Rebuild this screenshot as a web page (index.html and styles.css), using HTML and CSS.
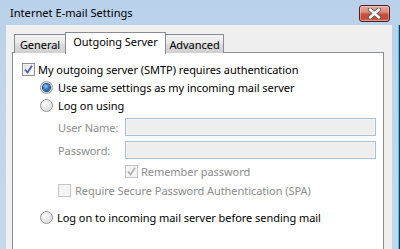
FILE: index.html
```html
<!DOCTYPE html>
<html>
<head>
<meta charset="utf-8">
<link rel="stylesheet" href="styles.css">
</head>
<body>
<div class="window">
  <div class="titlebar">
    <span class="title">Internet E-mail Settings</span>
    <div class="close">
      <svg width="15" height="11" viewBox="0 0 15 11">
        <path d="M3 1.5 L12 9.5 M12 1.5 L3 9.5" stroke="#5a5a5a" stroke-width="4.2" stroke-linecap="round"/>
        <path d="M3 1.5 L12 9.5 M12 1.5 L3 9.5" stroke="#ffffff" stroke-width="2.4" stroke-linecap="round"/>
      </svg>
    </div>
  </div>
  <div class="frame">
    <div class="client">
      <div class="tabs">
        <div class="tab tab-general">General</div>
        <div class="tab tab-active">Outgoing Server</div>
        <div class="tab tab-adv">Advanced</div>
      </div>
      <div class="panel">
        <div class="row row-auth">
          <span class="check checked"><svg width="9" height="9" viewBox="0 0 9 9"><path d="M1 4.5 L3.5 7.5 L8 0.8" fill="none" stroke="#4c62a8" stroke-width="1.8"/></svg></span>
          <span class="label">My outgoing server (SMTP) requires authentication</span>
        </div>
        <div class="row row-indent">
          <span class="radio selected"><span class="dot"></span></span>
          <span class="label">Use same settings as my incoming mail server</span>
        </div>
        <div class="row row-indent">
          <span class="radio"></span>
          <span class="label">Log on using</span>
        </div>
        <div class="field field-first">
          <span class="flabel">User Name:</span>
          <span class="input"></span>
        </div>
        <div class="field field-second">
          <span class="flabel">Password:</span>
          <span class="input"></span>
        </div>
        <div class="row row-remember">
          <span class="check disabled"><svg width="9" height="9" viewBox="0 0 9 9"><path d="M1 4.5 L3.5 7.5 L8 0.8" fill="none" stroke="#b4b4b4" stroke-width="1.8"/></svg></span>
          <span class="label dim">Remember password</span>
        </div>
        <div class="row row-spa">
          <span class="check disabled"></span>
          <span class="label dim">Require Secure Password Authentication (SPA)</span>
        </div>
        <div class="row row-last">
          <span class="radio"></span>
          <span class="label">Log on to incoming mail server before sending mail</span>
        </div>
      </div>
    </div>
    <div class="edge"></div>
  </div>
</div>
</body>
</html>
```

FILE: styles.css
```css
html, body {
  margin: 0;
  padding: 0;
}
body {
  width: 400px;
  height: 249px;
  overflow: hidden;
  font-family: "Noto Sans", "Open Sans", sans-serif;
  font-size: 11px;
  letter-spacing: -0.05px;
  color: #000;
}
.window {
  width: 400px;
  height: 249px;
  display: flex;
  flex-direction: column;
  background: linear-gradient(to bottom, #b9d1ea 0px, #c1d6ec 120px, #c4d8ee 249px);
}
.titlebar {
  height: 25px;
  flex: 0 0 25px;
  display: flex;
  align-items: flex-start;
  justify-content: space-between;
  padding: 0 10px 0 10px;
  box-sizing: border-box;
}
.title {
  margin-top: 5px;
  line-height: 16px;
  font-size: 11.1px;
  letter-spacing: 0;
  color: #000;
}
.close {
  margin-top: 5px;
  width: 31px;
  height: 17px;
  box-sizing: border-box;
  border: 1px solid #4b1e24;
  border-radius: 3px;
  background: linear-gradient(to bottom, #e9a99c 0%, #dc8a7b 40%, #c8503f 55%, #c24a38 80%, #d46b52 100%);
  box-shadow: inset 0 0 0 1px rgba(255,255,255,0.35);
  display: flex;
  align-items: center;
  justify-content: center;
}
.frame {
  flex: 1;
  display: flex;
  padding-left: 6px;
}
.client {
  width: 386px;
  background: #f0f0f0;
  padding: 7px 8px 0 6px;
  box-sizing: border-box;
  display: flex;
  flex-direction: column;
}
.edge {
  width: 6px;
  margin-left: 0;
  border-right: 1px solid #3fcbef;
  box-shadow: 1px 0 0 #1d3547;
}
.tabs {
  display: flex;
  align-items: flex-end;
  height: 21px;
  padding-left: 2px;
  position: relative;
  z-index: 1;
  margin-bottom: -1px;
}
.tab {
  box-sizing: border-box;
  height: 19px;
  border: 1px solid #898c95;
  border-bottom: none;
  background: linear-gradient(to bottom, #f2f2f2 0%, #ebebeb 45%, #dddddd 50%, #cfcfcf 100%);
  line-height: 17px;
  padding-top: 1px;
  text-align: center;
}
.tab-general {
  width: 51px;
  border-right: none;
}
.tab-active {
  width: 101px;
  height: 22px;
  background: #ffffff;
  line-height: 17px;
  padding-top: 0;
  margin-bottom: 0;
  position: relative;
  top: 1px;
}
.tab-adv {
  width: 58px;
  border-left: none;
}
.panel {
  flex: 1;
  background: #ffffff;
  border: 1px solid #898c95;
  border-bottom: none;
  padding-top: 7px;
  padding-left: 9px;
}
.row {
  height: 18px;
  display: flex;
  align-items: center;
}
.row-indent {
  padding-left: 18px;
}
.check {
  width: 13px;
  height: 13px;
  box-sizing: border-box;
  border: 1px solid #8e8f8f;
  background: linear-gradient(135deg, #dcdcdc 0%, #f4f4f4 60%, #ffffff 100%);
  box-shadow: inset 0 0 0 1px #f4f4f4;
  display: flex;
  align-items: center;
  justify-content: center;
  flex: 0 0 13px;
}
.check.disabled {
  border-color: #c4c4c4;
  background: #f4f4f4;
  box-shadow: none;
}
.label {
  margin-left: 3px;
  white-space: nowrap;
}
.row-indent .label {
  margin-left: 5px;
}
.dim {
  color: #8d8d8d;
}
.radio {
  width: 13px;
  height: 13px;
  box-sizing: border-box;
  border-radius: 50%;
  border: 1px solid #9a9a9a;
  background: radial-gradient(circle at 40% 35%, #ffffff 0%, #eaeaea 45%, #cfcfcf 100%);
  display: flex;
  align-items: center;
  justify-content: center;
  flex: 0 0 13px;
}
.radio .dot {
  width: 7px;
  height: 7px;
  border-radius: 50%;
  background: radial-gradient(circle at 40% 35%, #9fd0f5 0%, #2f7dc8 45%, #123f86 100%);
  box-shadow: 0 0 0 1px #1b3f78;
}
.field {
  height: 18px;
  display: flex;
  align-items: center;
  padding-left: 36px;
  color: #8d8d8d;
}
.field-first {
  margin-top: 4px;
}
.field-second {
  margin-top: 5px;
}
.flabel {
  width: 67px;
  flex: 0 0 67px;
  white-space: nowrap;
}
.input {
  width: 251px;
  height: 18px;
  box-sizing: border-box;
  border: 1px solid #abbfd6;
  background: #eeeeee;
  box-shadow: inset 0 0 0 1px #f5f5f5;
}
.row-remember {
  margin-top: 3px;
  padding-left: 103px;
}
.row-spa {
  margin-top: 1px;
  padding-left: 36px;
}
.row-spa .label {
  margin-left: 4px;
}
.row-last {
  margin-top: 9px;
  padding-left: 18px;
}
.row-last .label {
  margin-left: 4px;
}
```
